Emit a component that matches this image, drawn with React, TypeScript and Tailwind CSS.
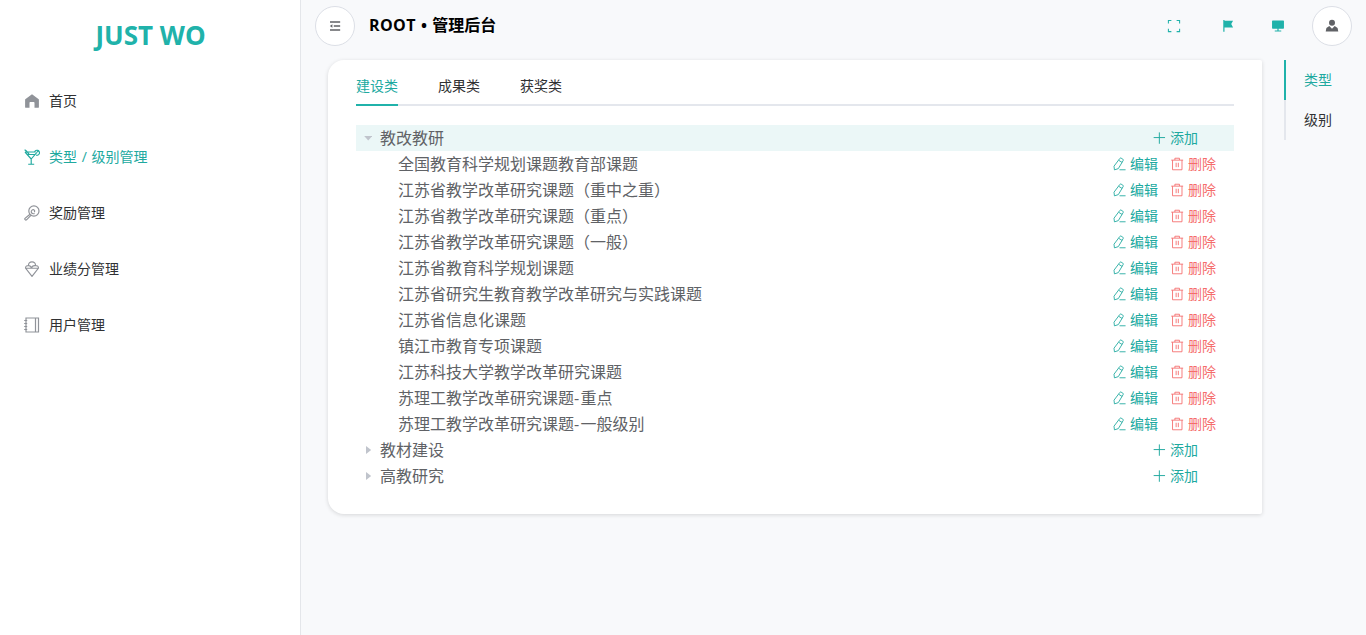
import React from 'react';

type IconProps = { className?: string };

const Svg = ({ className = '', children }: IconProps & { children: React.ReactNode }) => (
  <svg viewBox="0 0 16 16" fill="none" stroke="currentColor" strokeWidth="1" className={`shrink-0 ${className}`}>
    {children}
  </svg>
);

const HomeIcon = ({ className }: IconProps) => (
  <Svg className={className}>
    <path stroke="none" fill="currentColor" d="M8 1.2 14.4 6c.3.2.5.5.5.8v7.1c0 .6-.2.9-.8.9h-3.6V10c0-.7-.4-1-1-1h-3c-.6 0-1 .3-1 1v4.8H1.9c-.6 0-.8-.3-.8-.9V6.8c0-.3.2-.6.5-.8z" />
  </Svg>
);
const GobletIcon = ({ className }: IconProps) => (
  <Svg className={className}>
    <path strokeWidth="1.15" d="M.6.8 2.4 2l3 3.6M1 3h10.5M1 3l6.2 7v5M4.2 15.2h6M7.2 10l5.3-6.2M3.4 5.5h7.6" />
    <path strokeWidth="1.15" d="M10.6 3a2.5 2.5 0 1 1 1.5 3.1M12.4 3.6l1.8-1.5" />
  </Svg>
);
const LollipopIcon = ({ className }: IconProps) => (
  <Svg className={className}>
    <circle cx="9.9" cy="6" r="5.1" strokeWidth="1.2" />
    <path strokeWidth="1.2" d="M6 9.3 1 13.4c-.7.8.6 2.2 1.5 1.4l4.9-4.9M10 7c.9-.3.9-1.6 0-2.1-1.4-.7-3 .6-2.7 2.2.3 1.4 2 2 3.3 1.4" />
  </Svg>
);
const IceCreamIcon = ({ className }: IconProps) => (
  <Svg className={className}>
    <path strokeWidth="1.15" d="M4.5 4.6C4.3 2.3 5.8.8 8 .8s3.7 1.5 3.5 3.8c1.8-.1 3 .8 3 2.4L8 15.4 1.5 7c0-1.6 1.2-2.5 3-2.4ZM1.6 7.2h12.8M4.5 4.6c1.8 0 2.6.9 3 2.6M11.5 4.6c-2.2-.2-3.7.7-4 2.6" />
  </Svg>
);
const NotebookIcon = ({ className }: IconProps) => (
  <Svg className={className}>
    <path strokeWidth="1.2" d="M2 1h12.5v14H2zM11.5 1v14M.2 3.5h3M.2 6.5h3M.2 9.5h3M.2 12.5h3" />
  </Svg>
);
const FoldIcon = ({ className }: IconProps) => (
  <Svg className={className}>
    <path strokeWidth="1.7" d="M2.3 3.5h11.6M6.6 8h7.3M2.3 12.5h11.6" />
    <path stroke="none" fill="currentColor" d="m2.1 8 2.9-2.1v4.2z" />
  </Svg>
);
const FullIcon = ({ className }: IconProps) => (
  <Svg className={className}>
    <path strokeWidth="1.2" d="M1.6 5V1.6H5M11 1.6h3.4V5M14.4 11v3.4H11M5 14.4H1.6V11" />
  </Svg>
);
const FlagIcon = ({ className }: IconProps) => (
  <Svg className={className}>
    <path stroke="none" fill="currentColor" d="M2.6 1h1.4v.9h9.8l-2.1 3.8 2.1 3.9H4v5H2.6z" />
  </Svg>
);
const MonitorIcon = ({ className }: IconProps) => (
  <Svg className={className}>
    <path stroke="none" fill="currentColor" d="M2 1.6h12c.5 0 .8.3.8.8v8c0 .5-.3.8-.8.8H8.7v2h3v1.2H4.3v-1.2h3v-2H2c-.5 0-.8-.3-.8-.8v-8c0-.5.3-.8.8-.8z" />
  </Svg>
);
const UserIcon = ({ className }: IconProps) => (
  <Svg className={className}>
    <g stroke="none" fill="currentColor">
      <circle cx="8" cy="4.3" r="3.4" />
      <path d="M4.9 8.1 8 11.2l3.1-3.1 3.3 2.2.8 4.1H.8l.8-4.1z" />
    </g>
  </Svg>
);
const EditIcon = ({ className }: IconProps) => (
  <Svg className={className}>
    <path d="M8.9 1.7c.4-.6 1-.7 1.5-.4l2 1.2c.6.4.7.9.4 1.5L7.2 13.3l-4.4 1.4-.5-4.2zM7.8 3.9l3.8 2.3M8.6 14.6h6.9" />
  </Svg>
);
const TrashIcon = ({ className }: IconProps) => (
  <Svg className={className}>
    <path d="M1.4 3.6h13.6M5.6 3.4V1.4h5.2v2M2.9 3.6v11h10.8v-11M7 6.6v5M9.5 6.6v5" />
  </Svg>
);
const PlusIcon = ({ className }: IconProps) => (
  <Svg className={className}>
    <path strokeWidth="1.1" d="M8.4 1.6v13M1.9 7.5h13" />
  </Svg>
);

const menu = [
  { label: '首页', Icon: HomeIcon },
  { label: '类型 / 级别管理', Icon: GobletIcon, active: true },
  { label: '奖励管理', Icon: LollipopIcon },
  { label: '业绩分管理', Icon: IceCreamIcon },
  { label: '用户管理', Icon: NotebookIcon },
];

const children = [
  '全国教育科学规划课题教育部课题',
  '江苏省教学改革研究课题（重中之重）',
  '江苏省教学改革研究课题（重点）',
  '江苏省教学改革研究课题（一般）',
  '江苏省教育科学规划课题',
  '江苏省研究生教育教学改革研究与实践课题',
  '江苏省信息化课题',
  '镇江市教育专项课题',
  '江苏科技大学教学改革研究课题',
  '苏理工教学改革研究课题-重点',
  '苏理工教学改革研究课题-一般级别',
];

function ParentRow({ label, open = false }: { label: string; open?: boolean }) {
  return (
    <div className={`flex h-[26px] items-center pr-9 pl-2 ${open ? 'bg-[#ebf7f7]' : ''}`}>
      <svg viewBox="0 0 8 8" className="mr-[8px] h-2 w-2 shrink-0 fill-[#c0c4cc]">
        {open ? <path d="M.2 2h8L4.2 6.6z" /> : <path d="M2 0v8L7.2 4z" />}
      </svg>
      <span className="flex-1 text-base leading-[26px]">{label}</span>
      <button className="flex items-center gap-1 text-sm leading-[26px] text-[#20a99f]">
        <PlusIcon className="h-3.5 w-3.5" />
        添加
      </button>
    </div>
  );
}

function ChildRow({ label }: { label: string }) {
  return (
    <div className="flex h-[26px] items-center pr-[18px] pl-[42px]">
      <span className="flex-1 text-base leading-[26px]">
        {label.split('-').map((part, i) => (
          <React.Fragment key={part}>
            {i > 0 && <span className="tracking-[1.3px]">-</span>}
            {part}
          </React.Fragment>
        ))}
      </span>
      <button className="mr-3 flex items-center gap-1 text-sm leading-[26px] text-[#20a99f]">
        <EditIcon className="h-3.5 w-3.5" />
        编辑
      </button>
      <button className="flex items-center gap-1 text-sm leading-[26px] text-[#f56c6c]">
        <TrashIcon className="h-3.5 w-3.5" />
        删除
      </button>
    </div>
  );
}

export default function App() {
  return (
    <div className="flex h-[635px] w-[1366px] overflow-hidden bg-[#f8f9fb] font-['Open_Sans','Noto_Sans_CJK_SC',sans-serif] text-[#303133]">
      <aside className="w-[301px] shrink-0 border-r border-[#e4e6ea] bg-white">
        <h1 className="flex h-[73px] items-center justify-center pb-[2px] pl-px text-[26px] font-bold text-[#20b2aa]">JUST WO</h1>
        <nav>
          {menu.map(({ label, Icon, active }) => (
            <a key={label} className={`flex h-14 items-center gap-[9px] pl-6 text-sm ${active ? 'text-[#20a99f]' : ''}`}>
              <Icon className={`h-4 w-4 ${active ? '' : 'text-[#909399]'}`} />
              <span className="[word-spacing:1px]">{label}</span>
            </a>
          ))}
        </nav>
      </aside>

      <div className="flex min-w-0 flex-1 flex-col">
        <header className="flex h-[60px] shrink-0 items-start pt-1.5 pr-[14px] pl-[14px]">
          <button className="flex h-10 w-10 items-center justify-center rounded-full border border-[#dcdfe6] bg-white text-[#606266]">
            <FoldIcon className="h-3.5 w-3.5" />
          </button>
          <h2 className="ml-[14px] text-base leading-[38px] font-bold text-black [word-spacing:1px]">
            <span className="tracking-[0.4px]">ROOT</span> • 管理后台
          </h2>
          <div className="ml-auto flex h-10 items-center text-[#20b2aa]">
            <FullIcon className="mr-[40px] h-3.5 w-3.5" />
            <FlagIcon className="mr-[36px] h-3.5 w-3.5" />
            <MonitorIcon className="mr-[27px] h-3.5 w-3.5" />
            <button className="flex h-10 w-10 items-center justify-center rounded-full border border-[#dcdfe6] bg-white text-[#606266]">
              <UserIcon className="h-3.5 w-3.5" />
            </button>
          </div>
        </header>

        <div className="flex items-start">
          <main className="ml-[27px] h-[454px] w-[934px] rounded-l-[16px] rounded-r-[2px] bg-white px-7 pt-[6px] shadow-[0_1px_4px_rgba(0,0,0,0.14)]">
            <div className="flex h-10 gap-10 border-b-2 border-[#e4e7ed] text-sm leading-10">
              <span className="h-10 w-[42px] border-b-2 border-[#20b2aa] text-[#20a99f]">建设类</span>
              <span>成果类</span>
              <span>获奖类</span>
            </div>
            <div className="mt-[19px] text-[#606266]">
              <ParentRow label="教改教研" open />
              {children.map((c) => (
                <ChildRow key={c} label={c} />
              ))}
              <ParentRow label="教材建设" />
              <ParentRow label="高教研究" />
            </div>
          </main>
          <div className="ml-[22px] flex flex-col text-sm leading-10">
            <span className="border-l-2 border-[#20b2aa] pl-[18px] text-[#20a99f]">类型</span>
            <span className="border-l-2 border-[#e4e7ed] pl-[18px]">级别</span>
          </div>
        </div>
      </div>
    </div>
  );
}
